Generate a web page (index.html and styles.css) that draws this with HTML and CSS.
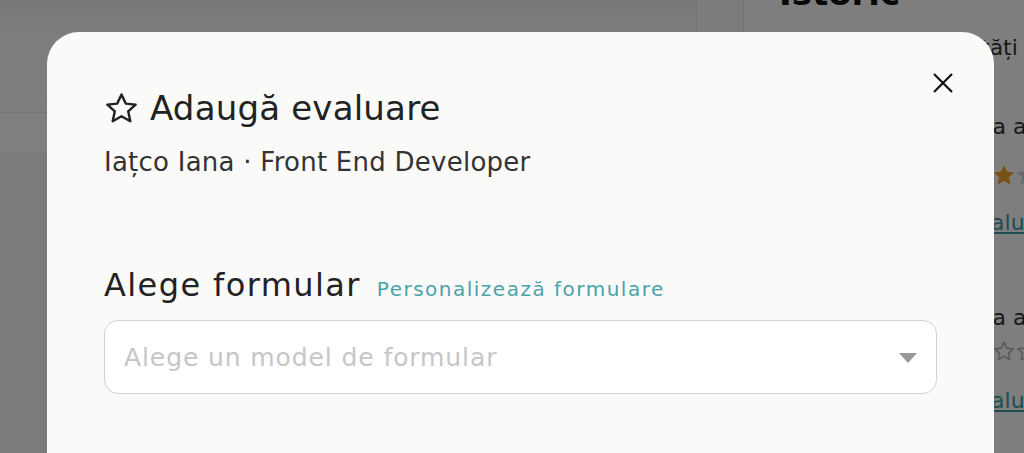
FILE: index.html
```html
<!DOCTYPE html>
<html lang="ro">
<head>
<meta charset="utf-8">
<title>Adaugă evaluare</title>
<link rel="stylesheet" href="styles.css">
</head>
<body>
<div class="page">
  <div class="main">
    <div class="main-top"></div>
    <div class="main-row"></div>
    <div class="main-body"></div>
  </div>
  <div class="gutter"></div>
  <aside class="sidebar">
    <h2 class="side-title">Istoric</h2>
    <p class="side-lead">Ultimele activități</p>
    <div class="side-item first">
      <p class="side-text">Iațco Iana a adăugat o evaluare</p>
      <div class="side-stars">
        <svg width="20" height="20" viewBox="2 2 20 19"><path d="M12 2.6 L14.8 8.6 L21.3 9.3 L16.4 13.7 L17.8 20.2 L12 16.9 L6.2 20.2 L7.6 13.7 L2.7 9.3 L9.2 8.6 Z" fill="#f0a22a" stroke="#f0a22a" stroke-width="1" stroke-linejoin="round"/></svg>
        <svg width="20" height="20" viewBox="2 2 20 19"><path d="M12 2.6 L14.8 8.6 L21.3 9.3 L16.4 13.7 L17.8 20.2 L12 16.9 L6.2 20.2 L7.6 13.7 L2.7 9.3 L9.2 8.6 Z" fill="#d2d2d2" stroke="#d2d2d2" stroke-width="1" stroke-linejoin="round"/></svg>
      </div>
      <a class="side-link" href="#">Vezi evaluarea</a>
    </div>
    <div class="side-item second">
      <p class="side-text">Iațco Iana a adăugat o evaluare</p>
      <div class="side-stars">
        <svg width="20" height="20" viewBox="2 2 20 19"><path d="M12 2.6 L14.8 8.6 L21.3 9.3 L16.4 13.7 L17.8 20.2 L12 16.9 L6.2 20.2 L7.6 13.7 L2.7 9.3 L9.2 8.6 Z" fill="none" stroke="#b4b4b4" stroke-width="1.6" stroke-linejoin="round"/></svg>
        <svg width="20" height="20" viewBox="2 2 20 19"><path d="M12 2.6 L14.8 8.6 L21.3 9.3 L16.4 13.7 L17.8 20.2 L12 16.9 L6.2 20.2 L7.6 13.7 L2.7 9.3 L9.2 8.6 Z" fill="none" stroke="#b4b4b4" stroke-width="1.6" stroke-linejoin="round"/></svg>
      </div>
      <a class="side-link" href="#">Vezi evaluarea</a>
    </div>
  </aside>
</div>
<div class="overlay">
  <div class="modal">
    <button class="close" aria-label="Închide">
      <svg width="20" height="20" viewBox="0 0 20 20"><path d="M1 1 L19 19 M19 1 L1 19" stroke="#111" stroke-width="2.2"/></svg>
    </button>
    <h1 class="title">
      <svg class="title-star" width="31" height="30" viewBox="1.8 1.8 20.4 19.4"><path d="M12 2.6 L14.8 8.6 L21.3 9.3 L16.4 13.7 L17.8 20.2 L12 16.9 L6.2 20.2 L7.6 13.7 L2.7 9.3 L9.2 8.6 Z" fill="none" stroke="#222" stroke-width="1.6" stroke-linejoin="round"/></svg>
      <span>Adaugă evaluare</span>
    </h1>
    <p class="subtitle">Iațco Iana · Front End Developer</p>
    <div class="label-row">
      <span class="label">Alege formular</span>
      <a class="link" href="#">Personalizează formulare</a>
    </div>
    <div class="select">
      <span class="placeholder">Alege un model de formular</span>
      <span class="caret"></span>
    </div>
  </div>
</div>
</body>
</html>
```

FILE: styles.css
```css
* { box-sizing: border-box; }
html, body { margin: 0; padding: 0; }
body {
  width: 1024px;
  height: 453px;
  overflow: hidden;
  position: relative;
  font-family: "DejaVu Sans", "Noto Sans", sans-serif;
  background: #fdfdfd;
}
.page {
  display: flex;
  height: 453px;
  overflow: hidden;
  background: #fdfdfd;
}
.main {
  width: 697px;
  display: flex;
  flex-direction: column;
  border-right: 1px solid #ececec;
}
.main-top {
  height: 113px;
  background: linear-gradient(#f0f0f0, #fafafa 30px, #fcfcfc);
  border-bottom: 1px solid #e8e8e8;
}
.main-row {
  height: 40px;
  background: #fefefe;
  border-bottom: 1px solid #ececec;
}
.main-body { flex: 1; background: #f6f6f6; }
.gutter {
  width: 47px;
  background: #f8f8f8;
  border-right: 1px solid #ebebeb;
}
.sidebar {
  flex: 1;
  min-width: 0;
  padding-left: 35px;
  overflow: hidden;
  white-space: nowrap;
  color: #333;
}
.side-title {
  margin: -24px 0 0;
  font-size: 34px;
  line-height: 34px;
  font-weight: bold;
  color: #111;
}
.side-lead {
  margin: 23px 0 0;
  padding-left: 44px;
  font-size: 22px;
  line-height: 30px;
}
.side-text {
  margin: 0;
  font-size: 22px;
  line-height: 28px;
  padding-left: 98px;
}
.side-stars {
  display: flex;
  gap: 3px;
  height: 24px;
  align-items: center;
  padding-left: 215px;
}
.side-stars svg { flex: none; }
.side-link {
  display: block;
  font-size: 22px;
  line-height: 26px;
  color: #3d9da3;
  text-decoration: underline;
  padding-left: 134px;
}
.first .side-text { margin-top: 50px; }
.first .side-stars { margin-top: 22px; }
.first .side-link { margin-top: 23px; }
.second .side-text { margin-top: 68px; }
.second .side-stars { margin-top: 7px; }
.second .side-link { margin-top: 25px; }
.overlay {
  position: absolute;
  inset: 0;
  background: rgba(0, 0, 0, 0.5);
  padding: 32px 30px 0 47px;
}
.modal {
  position: relative;
  width: 947px;
  height: 460px;
  background: #fafaf9;
  border-radius: 32px;
  padding: 56px 57px 0 57px;
  color: #222;
}
.close {
  position: absolute;
  top: 41px;
  right: 41px;
  width: 20px;
  height: 20px;
  padding: 0;
  border: 0;
  background: none;
  display: flex;
}
.title {
  margin: 0;
  display: flex;
  align-items: center;
  gap: 13px;
  font-size: 34px;
  line-height: 40px;
  font-weight: normal;
  letter-spacing: 0.2px;
  color: #222;
}
.title-star { margin-left: 2px; flex: none; }
.subtitle {
  margin: 19px 0 0;
  font-size: 26px;
  line-height: 30px;
  color: #333;
  letter-spacing: 0.25px;
}
.label-row {
  margin-top: 89px;
  display: flex;
  align-items: baseline;
  gap: 16px;
}
.label {
  font-size: 32px;
  line-height: 38px;
  letter-spacing: 1.4px;
  color: #222;
}
.link {
  font-size: 20px;
  line-height: 26px;
  letter-spacing: 1.5px;
  color: #4aa3a9;
  text-decoration: none;
}
.select {
  margin-top: 16px;
  height: 74px;
  border: 1.5px solid #d2d2d2;
  border-radius: 14px;
  background: #fff;
  display: flex;
  align-items: center;
  justify-content: space-between;
  padding: 0 19px;
}
.placeholder {
  font-size: 25px;
  letter-spacing: 0.9px;
  color: #c6c6c6;
}
.caret {
  width: 0;
  height: 0;
  border-left: 9.5px solid transparent;
  border-right: 9.5px solid transparent;
  border-top: 10px solid #999;
  margin-top: 1px;
}
```
